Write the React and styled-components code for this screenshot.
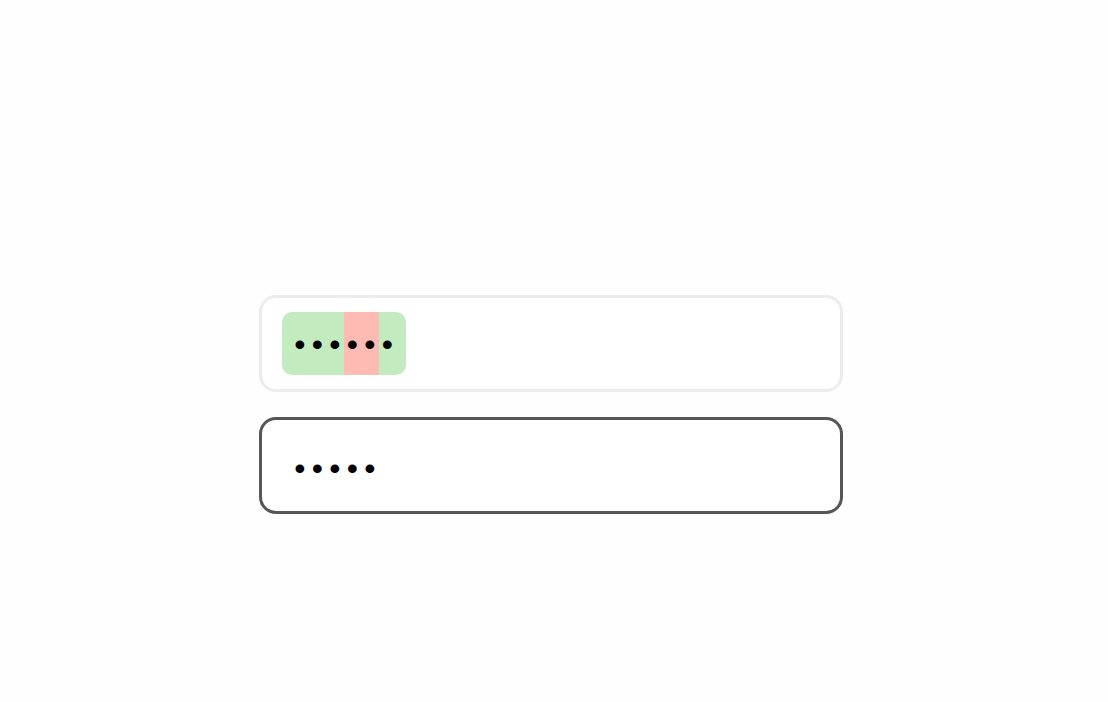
import React from "react";
import styled, { createGlobalStyle } from "styled-components";

const GlobalStyle = createGlobalStyle`
  html, body {
    margin: 0;
    padding: 0;
    background: #fefefe;
    font-family: "Liberation Sans", Arial, sans-serif;
  }
`;

const Page = styled.div`
  width: 1108px;
  height: 702px;
  box-sizing: border-box;
  padding: 295px 0 0 259px;
  display: flex;
  flex-direction: column;
  gap: 25px;
`;

const Field = styled.div`
  width: 584px;
  height: 97px;
  box-sizing: border-box;
  border: 3px solid ${(p) => (p.$active ? "#565656" : "#ececec")};
  border-radius: 17px;
  background: #fff;
  display: flex;
  align-items: center;
  padding: 0 ${(p) => (p.$active ? "29px" : "20px")};
`;

const Chip = styled.div`
  height: 63px;
  display: flex;
  border-radius: 10px;
  overflow: hidden;
`;

const Segment = styled.div`
  display: flex;
  align-items: center;
  background: ${(p) => (p.$bad ? "#ffbab3" : "#c2ecbf")};
  padding-left: ${(p) => p.$padLeft || 0}px;
  padding-right: ${(p) => p.$padRight || 0}px;
`;

const Dots = styled.div`
  display: flex;
  align-items: center;
  padding-top: ${(p) => (p.$low ? "5px" : "0")};
`;

const Dot = styled.span`
  width: 17.5px;
  text-align: center;
  font-size: 32px;
  line-height: 32px;
  color: #000;
`;

const renderDots = (n) =>
  Array.from({ length: n }).map((_, i) => <Dot key={i}>•</Dot>);

export default function App() {
  return (
    <>
      <GlobalStyle />
      <Page>
        <Field>
          <Chip>
            <Segment $padLeft={9}>{renderDots(3)}</Segment>
            <Segment $bad>{renderDots(2)}</Segment>
            <Segment $padRight={10}>{renderDots(1)}</Segment>
          </Chip>
        </Field>
        <Field $active>
          <Dots $low>{renderDots(5)}</Dots>
        </Field>
      </Page>
    </>
  );
}
